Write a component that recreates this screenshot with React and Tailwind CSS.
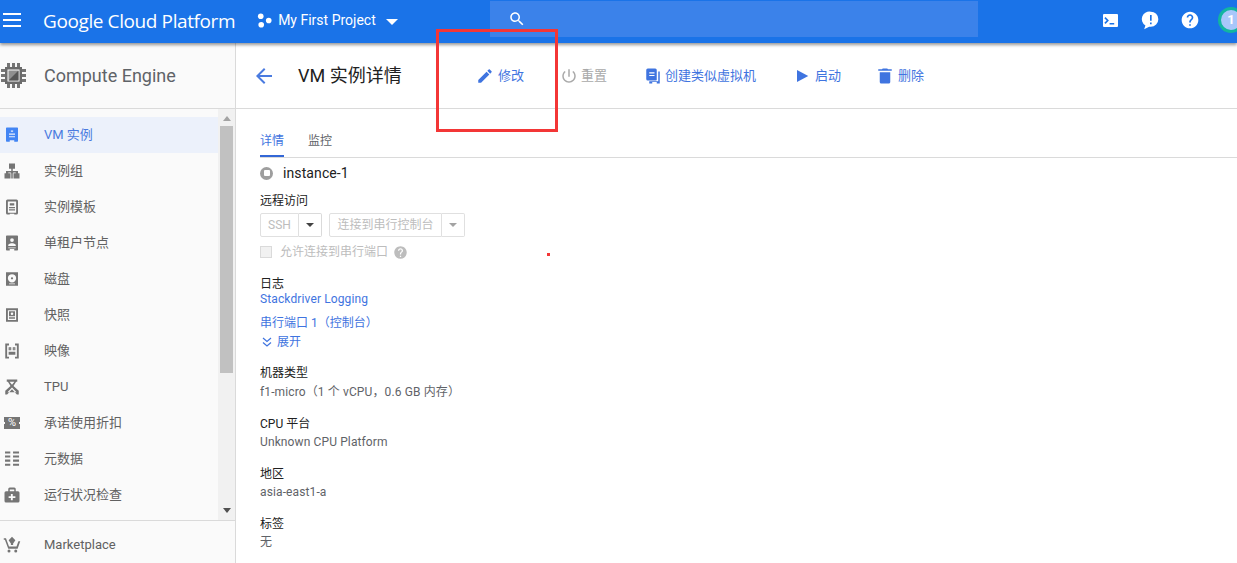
import React from "react";

const Icon = ({ d, className }) => (
  <svg viewBox="0 0 24 24" className={className} fill="currentColor"><path d={d} fillRule="evenodd" /></svg>
);

const paths = {
  edit: "M3 17.25V21h3.75L17.81 9.94l-3.75-3.75L3 17.25zM20.71 7.04c.39-.39.39-1.02 0-1.41l-2.34-2.34c-.39-.39-1.02-.39-1.41 0l-1.83 1.83 3.75 3.75 1.83-1.83z",
  power: "M13 3h-2v10h2V3zm4.83 2.17l-1.42 1.42C17.99 7.86 19 9.81 19 12c0 3.87-3.13 7-7 7s-7-3.13-7-7c0-2.19 1.01-4.14 2.58-5.42L6.17 5.17C4.23 6.82 3 9.26 3 12c0 4.97 4.03 9 9 9s9-4.03 9-9c0-2.74-1.23-5.18-3.17-6.83z",
  play: "M4 4v16l15-8z",
  trash: "M5 20c0 1.1.9 2 2 2h10c1.1 0 2-.9 2-2V7H5v13zM21 3h-5l-1-1H9L8 3H3v2h18V3z",
  back: "M20 11H7.83l5.59-5.59L12 4l-8 8 8 8 1.41-1.41L7.83 13H20v-2z",
  help: "M12 2C6.48 2 2 6.48 2 12s4.48 10 10 10 10-4.48 10-10S17.52 2 12 2zm1 17h-2v-2h2v2zm2.07-7.75l-.9.92C13.45 12.9 13 13.5 13 15h-2v-.5c0-1.1.45-2.1 1.17-2.83l1.24-1.26c.37-.36.59-.86.59-1.41 0-1.1-.9-2-2-2s-2 .9-2 2H8c0-2.21 1.79-4 4-4s4 1.79 4 4c0 .88-.36 1.68-.93 2.25z",
  search: "M15.5 14h-.79l-.28-.27C15.41 12.59 16 11.11 16 9.5 16 5.91 13.09 3 9.5 3S3 5.91 3 9.5 5.91 16 9.5 16c1.61 0 3.09-.59 4.23-1.57l.27.28v.79l5 4.99L20.49 19l-4.99-5zm-6 0C7.01 14 5 11.99 5 9.5S7.01 5 9.5 5 14 7.01 14 9.5 11.99 14 9.5 14z",
  vm: "M5 2h14a1 1 0 0 1 1 1v17a1 1 0 0 1-1 1h-4v-2H9v2H5a1 1 0 0 1-1-1V3a1 1 0 0 1 1-1zm5.5 4v1.5h3V6h-3zM8 10v1.5h8V10H8zm0 3.5V15h8v-1.5H8z",
  clone: "M5 2h10a2 2 0 0 1 2 2v13a1 1 0 0 1-1 1H5a2 2 0 0 1-2-2V4a2 2 0 0 1 2-2zm2 5v1.5h7V7H7zm0 3.5V12h7v-1.5H7zM19 6h2v16h-4v-2h-6v2H7v-3h12V6z",
  template: "M6 2h12a2 2 0 0 1 2 2v16a2 2 0 0 1-2 2h-3v-1H9v1H6a2 2 0 0 1-2-2V4a2 2 0 0 1 2-2zm.5 2.5v15h11v-15h-11zM9 7h6v3H9V7zm-1 5h8v1.5H8V12zm0 3h8v1.5H8V15z",
  group: "M8 2h8v7h-3v3h7v3h2v7h-8v-7h3v-1h-3.5v1H13v7H11v-7h-.5v-1H7v1h3v7H2v-7h2v-3h7V9H8V2z",
  tenant: "M5 2h14a1 1 0 0 1 1 1v18a1 1 0 0 1-1 1h-4v-2H9v2H5a1 1 0 0 1-1-1V3a1 1 0 0 1 1-1zm7 3.5a2.5 2.5 0 1 0 0 5 2.5 2.5 0 0 0 0-5zM7 14.5V16h10v-1.5c0-1.5-3.5-2.3-5-2.3s-5 .8-5 2.3zM7 18v1h10v-1H7z",
  disk: "M4 3h16v18H4V3zm8 2.5a5.5 5.5 0 1 0 0 11 5.5 5.5 0 0 0 0-11zm0 4a1.5 1.5 0 1 1 0 3 1.5 1.5 0 0 1 0-3zM8 18v1h8v-1H8z",
  snapshot: "M4 3h16v18H4V3zm2.5 2.5v13h11v-13h-11zM8 7h8v6.5H8V7zm4 1.5a1.7 1.7 0 1 0 0 3.4 1.7 1.7 0 0 0 0-3.4zM8 15h8v2H8v-2z",
  image: "M3 2h5v2.5H5.5v15H8V22H3V2zm13 0h5v20h-5v-2.5h2.5v-15H16V2zM7.5 7H11v4H7.500zM13 7h3.5v4H13V7zm-4 1.5V10h.7V8.500H9zM14.300 8.500V10h.9V8.500h-.9zM7.500 13h9v4h-9v-4z",
  tpu: "M5 2h14v3h-1.500L14 10.500 21 17v5h-2.500L12 15l-6.500 7H3v-5l7-6.500L6.500 5H5V2zm3.800 3l3.200 4 3.200-4H8.800zM12 12.500L6 19h12l-6-6.500z",
  meta: "M2.700 2h7v2.700h-7V2zm10.700 0h8v2.700h-8V2zM2.700 7.400h7v2.700h-7V7.400zm10.700 0h8v2.700h-8V7.400zM2.700 12.800h7v2.700h-7v-2.700zm10.700 0h8v2.700h-8v-2.700zM2.700 18.200h7v2.700h-7v-2.700zm10.700 0h8v2.700h-8v-2.700z",
  health: "M9 2h6a2 2 0 0 1 2 2v3h3a2 2 0 0 1 2 2v11a2 2 0 0 1-2 2H4a2 2 0 0 1-2-2V9a2 2 0 0 1 2-2h3V4a2 2 0 0 1 2-2zm0 2.500V7h6V4.500H9zM10.500 10.500v3h-3v2.500h3v3H13v-3h3.500v-2.500H13v-3h-2.500z",
  cart: "M12 1l4.500 4.500L13.500 10v2h-3v-2l-3-4.500L12 1zM1 3h3l4 11h10l2.500-7H23l-3.500 10H7L2.500 5H1V3zm7 15a2 2 0 1 1 0 4 2 2 0 0 1 0-4zm9 0a2 2 0 1 1 0 4 2 2 0 0 1 0-4z",
};

const navItems = [
  { icon: paths.vm, label: "VM 实例", active: true },
  { icon: paths.group, label: "实例组" },
  { icon: paths.template, label: "实例模板" },
  { icon: paths.tenant, label: "单租户节点" },
  { icon: paths.disk, label: "磁盘" },
  { icon: paths.snapshot, label: "快照" },
  { icon: paths.image, label: "映像" },
  { icon: paths.tpu, label: "TPU" },
  { icon: "percent", label: "承诺使用折扣" },
  { icon: paths.meta, label: "元数据" },
  { icon: paths.health, label: "运行状况检查" },
];

const actions = [
  { icon: paths.edit, label: "修改", w: "w-[84px]", gap: "gap-[4px]" },
  { icon: paths.power, label: "重置", w: "w-[84px]", gap: "gap-[3px]", disabled: true },
  { icon: paths.clone, label: "创建类似虚拟机", w: "w-[150px]", gap: "gap-[3px]" },
  { icon: paths.play, label: "启动", w: "w-[82px]", gap: "gap-[3px]" },
  { icon: paths.trash, label: "删除", w: "w-[80px]", gap: "gap-[4px]" },
];

function NavRow({ item }) {
  return (
    <div className={`h-9 flex items-center pl-[3px] ${item.active ? "bg-[#ecf1fb] text-[#4a7be0]" : "text-[#616161]"}`}>
      {item.icon === "percent" ? (
        <div className="relative w-4 h-[12px] mx-[1px] bg-[#757575] text-white text-[11px] leading-[12px] text-center">
          %
          <div className="absolute left-[-1px] top-[5px] w-[2px] h-[2px] bg-[#fafafa]" />
          <div className="absolute right-[-1px] top-[5px] w-[2px] h-[2px] bg-[#fafafa]" />
        </div>
      ) : (
        <Icon d={item.icon} className={`w-[18px] h-[18px] ${item.active ? "text-[#4285f4]" : "text-[#757575]"}`} />
      )}
      <span className="ml-[23px] text-[13px]">{item.label}</span>
    </div>
  );
}

function Field({ label, value, className, valueClass }) {
  return (
    <div className={className}>
      <div className="text-[12px] leading-[18px] text-[#212121]">{label}</div>
      <div className={`text-[12px] leading-[18px] text-[#5f6368] tracking-[0.12px] ${valueClass || ""}`}>{value}</div>
    </div>
  );
}

export default function App() {
  return (
    <div className="relative w-[1237px] h-[563px] overflow-hidden bg-white flex flex-col font-['Roboto','Noto_Sans_CJK_SC',sans-serif]">
      {/* top bar */}
      <header className="relative z-10 h-[43px] shrink-0 bg-[#1a73e8] shadow-[0_2px_3px_rgba(0,0,0,0.4)] flex items-center text-white">
        <div className="ml-[3px] mb-[3px] w-[18px] flex flex-col gap-[4px]">
          <div className="h-[2px] bg-white" />
          <div className="h-[2px] bg-white" />
          <div className="h-[2px] bg-white" />
        </div>
        <span className="ml-[22px] text-[19px] font-['Open_Sans','Roboto',sans-serif] tracking-[-0.4px] whitespace-nowrap">Google Cloud Platform</span>
        <svg viewBox="0 0 16 16" className="ml-[22px] mb-[3px] w-[15px] h-[15px]" fill="currentColor">
          <circle cx="4" cy="3.5" r="3" />
          <circle cx="12.5" cy="8" r="3" />
          <circle cx="4.5" cy="12.5" r="3" />
        </svg>
        <span className="ml-[6px] mb-[3px] text-[14px] whitespace-nowrap">My First Project</span>
        <div className="ml-[10px] mt-[1px] w-0 h-0 border-x-[6px] border-x-transparent border-t-[6px] border-t-white" />
        <div className="ml-[92px] h-[36px] w-[488px] mb-[5px] bg-[#3b82ea] flex items-center pl-[18px]">
          <Icon d={paths.search} className="w-[18px] h-[18px]" />
        </div>
        <div className="ml-auto flex items-center mb-[3px]">
          <div className="w-[15px] h-[13px] bg-white rounded-[1px] flex items-center text-[#1a73e8] pl-[1px]">
            <svg viewBox="0 0 14 14" className="w-[13px] h-[13px]" fill="none" stroke="currentColor" strokeWidth="1.8">
              <path d="M1 4l3 3-3 3M6 10.5h5" />
            </svg>
          </div>
          <svg viewBox="0 0 24 24" className="ml-[22px] w-[20px] h-[20px]" fill="currentColor">
            <path d="M13 2a9 9 0 0 1 0 18h-2l-6 3 1.500-4.500A9 9 0 0 1 13 2zM12 6v7h2V6h-2zm0 9v2h2v-2h-2z" fillRule="evenodd" />
          </svg>
          <Icon d={paths.help} className="ml-[20px] w-[20px] h-[20px]" />
          <div className="ml-[18px] mr-[-7px] w-[26px] h-[26px] rounded-full border-[3px] border-[#12b5a0] bg-[#a8c7fa] flex items-center justify-center text-[13px] font-bold">1</div>
        </div>
      </header>

      <div className="flex-1 flex min-h-0">
        {/* left nav */}
        <aside className="w-[236px] shrink-0 bg-[#fafafa] border-r border-[#dadada] flex flex-col">
          <div className="h-[66px] shrink-0 border-b border-[#dadada] flex items-center">
            <svg viewBox="0 0 27 27" className="w-[27px] h-[27px]">
              <path d="M5 5h17v17H5V5zm2.500 2.500v12h12v-12h-12z" fill="#6b6b6b" fillRule="evenodd" />
              <path d="M8.500 8.500h10v10h-10z" fill="#8f8f8f" />
              <path d="M18.500 8.500v10h-10z" fill="#565656" />
              <path d="M7 1h3v4H7zM12 1h3v4h-3zM17 1h3v4h-3zM7 22h3v4H7zM12 22h3v4h-3zM17 22h3v4h-3zM1 7h4v3H1zM1 12h4v3H1zM1 17h4v3H1zM22 7h4v3h-4zM22 12h4v3h-4zM22 17h4v3h-4z" fill="#757575" />
            </svg>
            <span className="ml-[17px] text-[18px] text-[#5f6368]">Compute Engine</span>
          </div>
          <div className="flex-1 flex min-h-0">
            <nav className="flex-1 pt-[8px] min-w-0">
              {navItems.map((item) => (
                <NavRow key={item.label} item={item} />
              ))}
            </nav>
            <div className="w-[17px] bg-[#f1f1f1] flex flex-col items-center pt-[7px]">
              <div className="w-0 h-0 border-x-[4px] border-x-transparent border-b-[5px] border-b-[#a3a3a3]" />
              <div className="mt-[5px] w-[13px] h-[247px] bg-[#c1c1c1]" />
              <div className="mt-auto mb-[7px] w-0 h-0 border-x-[4px] border-x-transparent border-t-[5px] border-t-[#505050]" />
            </div>
          </div>
          <div className="h-[43px] shrink-0 border-t border-[#dadada] flex items-center pt-[6px] pl-[3px] text-[#616161]">
            <Icon d={paths.cart} className="w-[18px] h-[18px] text-[#757575]" />
            <span className="ml-[23px] text-[13px]">Marketplace</span>
          </div>
        </aside>

        {/* main */}
        <main className="flex-1 min-w-0 flex flex-col">
          <div className="h-[66px] shrink-0 border-b border-[#dadada] flex items-center">
            <Icon d={paths.back} className="ml-[16px] w-[24px] h-[24px] text-[#4a7be0]" />
            <h1 className="ml-[22px] w-[178px] text-[18px] font-normal text-[#212121] whitespace-nowrap">VM 实例详情</h1>
            {actions.map((a) => (
              <div key={a.label} className={`${a.w} ${a.gap} flex items-center text-[13px] ${a.disabled ? "text-[#a9a9a9]" : "text-[#3f74e0]"}`}>
                <Icon d={a.icon} className="w-[18px] h-[18px]" />
                <span className="whitespace-nowrap">{a.label}</span>
              </div>
            ))}
          </div>

          <div className="pl-[24px] flex-1 min-h-0">
            <div className="h-[49px] border-b border-[#dadada] flex items-end text-[12px]">
              <div className="w-[24px] h-[30px] leading-[28px] text-center text-[#3f74e0] border-b-2 border-[#3367d6] whitespace-nowrap">详情</div>
              <div className="ml-[24px] h-[30px] leading-[28px] text-[#5f6368] whitespace-nowrap">监控</div>
            </div>

            <div className="h-[30px] flex items-center">
              <div className="w-[13px] h-[13px] rounded-full bg-[#9e9e9e] flex items-center justify-center">
                <div className="w-[6px] h-[6px] bg-white rounded-[1px]" />
              </div>
              <span className="ml-[10px] text-[14px] text-[#212121] tracking-[0.1px]">instance-1</span>
            </div>

            <div className="mt-[4px] text-[12px] leading-[18px] text-[#212121]">远程访问</div>
            <div className="mt-[3px] flex h-[24px] text-[12px]">
              <div className="w-[39px] border border-[#e0e0e0] rounded-l-[2px] flex items-center justify-center text-[#bdbdbd]">SSH</div>
              <div className="w-[23px] border border-l-0 border-[#dadada] rounded-r-[2px] flex items-center justify-center">
                <div className="w-0 h-0 border-x-[4px] border-x-transparent border-t-[4px] border-t-[#424242]" />
              </div>
              <div className="ml-[7px] w-[113px] border border-[#e0e0e0] rounded-l-[2px] flex items-center justify-center text-[#bdbdbd] whitespace-nowrap">连接到串行控制台</div>
              <div className="w-[23px] border border-l-0 border-[#e0e0e0] rounded-r-[2px] flex items-center justify-center">
                <div className="w-0 h-0 border-x-[4px] border-x-transparent border-t-[4px] border-t-[#a3a3a3]" />
              </div>
            </div>
            <div className="mt-[7px] h-[16px] flex items-center text-[12px] text-[#bdbdbd]">
              <div className="w-[12px] h-[12px] bg-[#f1f1f1] border border-[#dadada]" />
              <span className="ml-[8px] whitespace-nowrap">允许连接到串行端口</span>
              <Icon d={paths.help} className="ml-[5px] w-[15px] h-[15px] text-[#bdbdbd]" />
            </div>

            <div className="mt-[16px] text-[12px] leading-[16px] text-[#212121]">日志</div>
            <div className="text-[12px] leading-[14px] text-[#3f74e0] tracking-[0.12px]">Stackdriver Logging</div>
            <div className="mt-[8px] text-[12px] leading-[18px] text-[#3f74e0] whitespace-nowrap">串行端口 1（控制台）</div>
            <div className="h-[20px] flex items-center text-[12px] text-[#3f74e0]">
              <svg viewBox="0 0 12 12" className="w-[12px] h-[12px] ml-[1px]" fill="none" stroke="currentColor" strokeWidth="1.2">
                <path d="M2 2l4 3.500L10 2M2 6.500l4 3.500 4-3.500" />
              </svg>
              <span className="ml-[4px]">展开</span>
            </div>

            <Field className="mt-[12px]" valueClass="mt-[1px]" label="机器类型" value="f1-micro（1 个 vCPU，0.6 GB 内存）" />
            <Field className="mt-[14px]" label="CPU 平台" value="Unknown CPU Platform" />
            <Field className="mt-[14px]" label="地区" value="asia-east1-a" />
            <Field className="mt-[14px]" label="标签" value="无" />
          </div>
        </main>
      </div>

      {/* annotation drawn over the screenshot */}
      <div className="absolute z-20 left-[436px] top-[29px] w-[122px] h-[103px] border-[3px] border-[#f33636]" />
      <div className="absolute z-20 left-[547px] top-[253px] w-[3px] h-[3px] bg-[#f33636]" />
    </div>
  );
}
